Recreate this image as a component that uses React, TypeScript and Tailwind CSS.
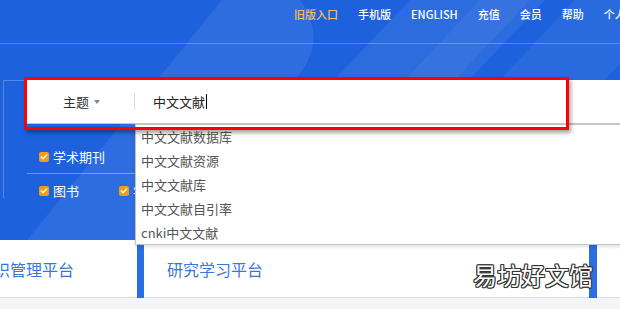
import { Check } from 'lucide-react';

const navItems = ['旧版入口', '手机版', 'ENGLISH', '充值', '会员', '帮助', '个人中心'];
const suggestions = ['中文文献数据库', '中文文献资源', '中文文献库', '中文文献自引率', 'cnki中文文献'];

function Box({ label }: { label: string }) {
  return (
    <div className="flex items-center gap-[4px] w-[80px] shrink-0">
      <span className="w-[10px] h-[10px] shrink-0 rounded-[2px] bg-[#f39c1c] flex items-center justify-center">
        <Check size={8} strokeWidth={4} className="text-white" />
      </span>
      <span className="text-[13px] leading-[20px] text-white whitespace-nowrap">{label}</span>
    </div>
  );
}

export default function App() {
  return (
    <div className="relative w-[620px] h-[309px] overflow-hidden bg-[#f4f5f8] font-['Noto_Sans_CJK_SC','Noto_Sans',sans-serif]">
      {/* Blue header */}
      <div className="relative h-[298px] bg-[#1d61dd] overflow-hidden">
        <svg className="absolute inset-0" width="620" height="298" viewBox="0 0 620 298">
          <path d="M222 0 L300 0 C322 30 318 62 282 92 L110 298 L-20 298 Z" fill="#ffffff" opacity="0.08" />
          <path d="M410 0 L545 0 L262 298 L127 298 Z" fill="#ffffff" opacity="0.07" />
          <path d="M480 0 L530 0 L250 298 L200 298 Z" fill="#ffffff" opacity="0.05" />
          <path d="M575 0 L680 0 L400 298 L295 298 Z" fill="#ffffff" opacity="0.06" />
        </svg>

        {/* Top nav */}
        <div className="relative h-[44px] border-b border-white/25 flex pl-[294px] gap-[20px] pt-[7px] whitespace-nowrap">
          {navItems.map((item, i) => (
            <span
              key={item}
              className={`text-[11px] leading-[14px] font-medium shrink-0 ${i === 0 ? 'text-[#eec35a]' : 'text-white'}`}
            >
              {item}
            </span>
          ))}
        </div>

        {/* Search area */}
        <div className="relative flex mt-[36px] pl-[3px]">
          <div className="w-[24px] h-[118px] border-l border-t border-white/25 shrink-0" />
          <div className="flex-1 flex flex-col">
            <div className="h-[44px] bg-white border-b border-[#c8c8c8] flex items-center pl-[36px]">
              <span className="text-[13px] text-[#333]">主题</span>
              <span className="ml-[5px] w-0 h-0 border-l-[3.5px] border-r-[3.5px] border-t-[4px] border-l-transparent border-r-transparent border-t-[#888]" />
              <span className="ml-[34px] w-px h-[17px] bg-[#dcdcdc]" />
              <span className="ml-[18px] text-[13px] text-[#222]">中文文献</span>
              <span className="ml-[1px] w-px h-[15px] bg-black" />
            </div>

            <div className="pl-[12px] pt-[23px]">
              <Box label="学术期刊" />
            </div>
            <div className="w-[108px] h-px bg-white/35 mt-[6px]" />
            <div className="flex pl-[12px] mt-[7px]">
              <Box label="图书" />
              <div className="w-[16px] overflow-hidden">
                <Box label="学位论文" />
              </div>
            </div>
          </div>
        </div>

        {/* Platform cards */}
        <div className="absolute left-0 right-0 top-[240px] h-[58px] flex gap-[7px] bg-[#2a6ee2] ml-[-45px]">
          <div className="w-[182px] shrink-0 bg-white border-b border-[#d6dbe4] flex items-center pl-[23px] text-[16px] text-[#3a76d6]">
            知识管理平台
          </div>
          <div className="w-[445px] shrink-0 bg-white border-b border-[#d6dbe4] flex items-center pl-[23px] text-[16px] text-[#3a76d6]">
            研究学习平台
          </div>
          <div className="flex-1 ml-[1px] bg-white border-b border-[#d6dbe4]" />
        </div>
      </div>

      {/* Suggestion dropdown */}
      <div className="absolute left-[135px] top-[124px] w-[500px] h-[121px] bg-white border border-[#c4c4c4] shadow-[0_2px_3px_rgba(0,0,0,0.12)]">
        {suggestions.map(s => (
          <div key={s} className="h-[24px] flex items-center pl-[5px] text-[13px] text-[#555]">
            {s}
          </div>
        ))}
      </div>

      {/* Red annotation */}
      <div className="absolute left-[24px] top-[77px] w-[545px] h-[53px] border-[3px] border-[#ff0000] shadow-[2px_3px_4px_rgba(0,0,0,0.35)]" />

      {/* Watermark */}
      <div className="absolute left-[473px] top-[259px] text-[24px] leading-[32px] text-white [text-shadow:-1px_0_#333,1px_0_#333,0_-1px_#333,0_1px_#333,-1px_-1px_#333,1px_1px_#333,-1px_1px_#333,1px_-1px_#333]">
        易坊好文馆
      </div>
    </div>
  );
}
